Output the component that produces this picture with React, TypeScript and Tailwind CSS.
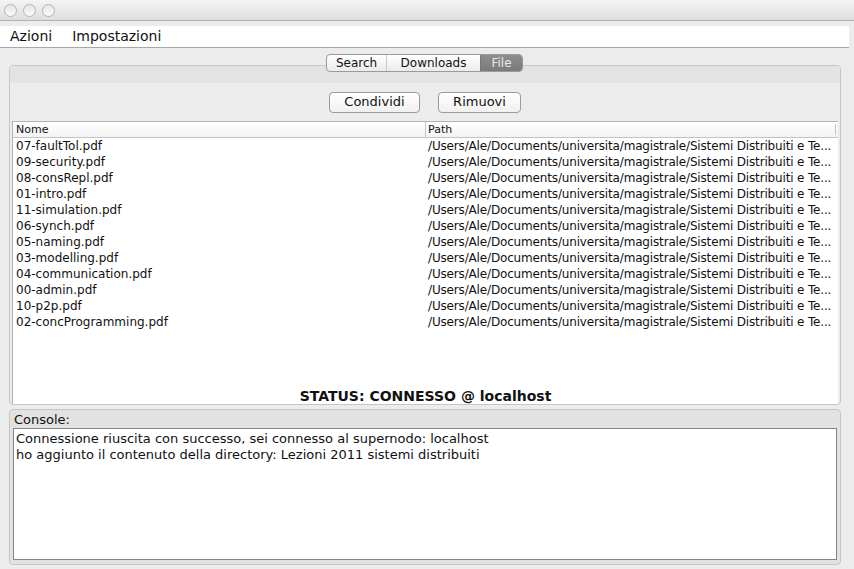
import React from "react";

const files = [
  "07-faultTol.pdf",
  "09-security.pdf",
  "08-consRepl.pdf",
  "01-intro.pdf",
  "11-simulation.pdf",
  "06-synch.pdf",
  "05-naming.pdf",
  "03-modelling.pdf",
  "04-communication.pdf",
  "00-admin.pdf",
  "10-p2p.pdf",
  "02-concProgramming.pdf",
];

const path = "/Users/Ale/Documents/universita/magistrale/Sistemi Distribuiti e Te...";

function Light() {
  return (
    <div className="w-[13px] h-[13px] rounded-full border border-[#b4b4b4] bg-gradient-to-b from-[#e6e6e6] to-[#fafafa]" />
  );
}

export default function App() {
  return (
    <div
      className="w-[854px] h-[569px] bg-[#ececec] flex flex-col text-[#111] overflow-hidden"
      style={{ fontFamily: '"DejaVu Sans", "Liberation Sans", sans-serif' }}
    >
      {/* title bar */}
      <div className="h-[21px] shrink-0 bg-gradient-to-b from-[#f4f4f4] to-[#dedede] border-b border-[#b1b1b1] flex items-center gap-[6px] pl-[4px]">
        <Light />
        <Light />
        <Light />
      </div>

      {/* menu */}
      <div className="mt-[5px] mr-[5px] h-[22px] shrink-0 bg-white border-b border-[#a7a7a7] flex items-center gap-[20px] pl-[10px] text-[14px]">
        <span>Azioni</span>
        <span>Impostazioni</span>
      </div>

      {/* tabs */}
      <div className="mt-[6px] h-[18px] shrink-0 flex justify-center relative z-10 -mb-[7px] pr-[5px]">
        <div className="flex rounded-[4px] border border-[#9a9a9a] overflow-hidden text-[12px] bg-gradient-to-b from-white to-[#ebebeb]">
          <div className="w-[60px] flex items-center justify-center border-r border-[#c8c8c8]">Search</div>
          <div className="w-[93px] flex items-center justify-center">Downloads</div>
          <div className="w-[42px] flex items-center justify-center bg-gradient-to-b from-[#8e8e8e] to-[#7a7a7a] text-[#e8e8e8] border-l border-[#777]">
            File
          </div>
        </div>
      </div>

      {/* main panel */}
      <div className="ml-[9px] mr-[13px] h-[340px] shrink-0 border border-[#c6c6c6] rounded-[4px] flex flex-col overflow-hidden">
        <div className="h-[17px] shrink-0 bg-[#e3e3e3]" />
        <div className="h-[38px] shrink-0 flex items-center justify-center gap-[18px] text-[13px]">
          <div className="w-[91px] h-[21px] rounded-[4px] border border-[#9b9b9b] bg-gradient-to-b from-white to-[#f0f0f0] flex items-center justify-center">
            Condividi
          </div>
          <div className="w-[83px] h-[21px] rounded-[4px] border border-[#9b9b9b] bg-gradient-to-b from-white to-[#f0f0f0] flex items-center justify-center">
            Rimuovi
          </div>
        </div>
        <div className="mx-[2px] flex-1 bg-white border-l border-t border-[#b4b4b4] flex flex-col text-[12px]">
          <div className="h-[16px] shrink-0 flex border-b border-[#c4c4c4] bg-gradient-to-b from-white to-[#f3f3f3] text-[11px]">
            <div className="w-[412px] pl-[3px] leading-[15px]">Nome</div>
            <div className="flex-1 border-l border-[#c4c4c4] pl-[2px] leading-[15px]">Path</div>
            <div className="w-[3px] border-l border-[#c4c4c4] my-[2px]" />
          </div>
          {files.map((f) => (
            <div key={f} className="h-[16px] flex leading-[17px]">
              <div className="w-[412px] pl-[3px]">{f}</div>
              <div className="flex-1 pl-[3px] whitespace-nowrap overflow-hidden tracking-[-0.16px]">{path}</div>
            </div>
          ))}
          <div className="flex-1" />
          <div className="h-[20px] shrink-0 text-center font-bold text-[14px] leading-[24px]">
            STATUS: CONNESSO @ localhost
          </div>
        </div>
      </div>

      {/* console */}
      <div className="mt-[4px] ml-[9px] mr-[13px] h-[156px] shrink-0 border border-[#c6c6c6] rounded-[4px] bg-[#e2e2e2] flex flex-col px-[3px] pb-[4px]">
        <div className="h-[18px] shrink-0 text-[13px] leading-[20px] pl-[1px]">Console:</div>
        <div className="flex-1 bg-white border border-[#858585] px-[2px] pt-[2px] text-[13px] leading-[16px]">
          <div>Connessione riuscita con successo, sei connesso al supernodo: localhost</div>
          <div>ho aggiunto il contenuto della directory: Lezioni 2011 sistemi distribuiti</div>
        </div>
      </div>
    </div>
  );
}
